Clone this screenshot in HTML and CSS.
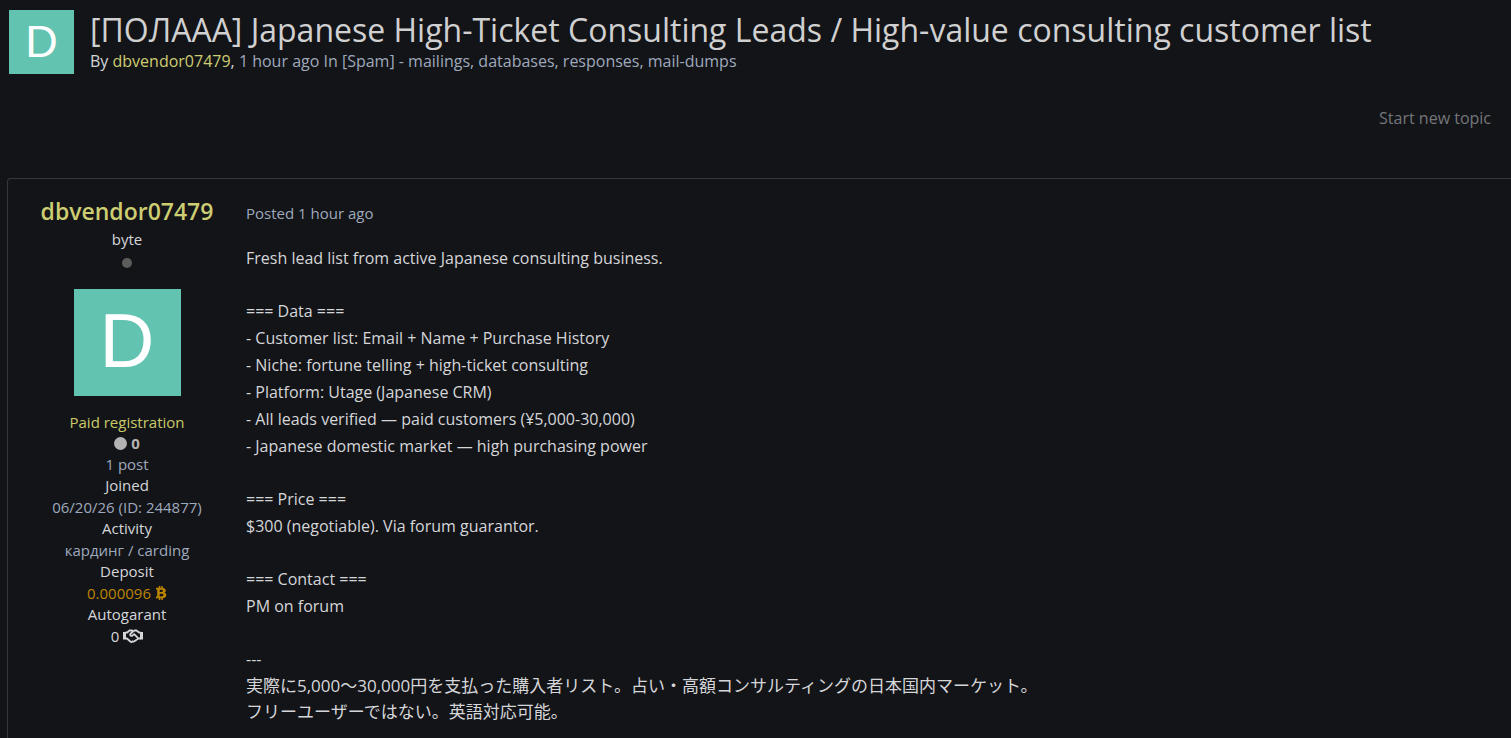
FILE: index.html
```html
<!DOCTYPE html>
<html lang="en">
<head>
<meta charset="utf-8">
<meta name="viewport" content="width=device-width, initial-scale=1">
<title>Japanese High-Ticket Consulting Leads</title>
<link rel="stylesheet" href="styles.css">
</head>
<body>
<header class="topic-header">
  <div class="avatar avatar-small">D</div>
  <div class="topic-heading">
    <h1 class="topic-title">[ПОЛААА] Japanese High-Ticket Consulting Leads / High-value consulting customer list</h1>
    <p class="topic-meta"><span class="strong-text">By <a class="user-link" href="#user">dbvendor07479</a>,</span> 1 hour ago In <a class="forum-link" href="#forum">[Spam] - mailings, databases, responses, mail-dumps</a></p>
  </div>
</header>
<nav class="topic-actions">
  <a class="new-topic" href="#new">Start new topic</a>
</nav>
<main class="post">
  <aside class="author">
    <h2 class="author-name"><a class="user-link" href="#user">dbvendor07479</a></h2>
    <p class="author-rank">byte</p>
    <span class="status-dot"></span>
    <div class="avatar avatar-large">D</div>
    <p class="author-group">Paid registration</p>
    <p class="reputation"><span class="reputation-dot"></span>0</p>
    <p class="post-count">1 post</p>
    <dl class="author-stats">
      <dt>Joined</dt>
      <dd>06/20/26 (ID: 244877)</dd>
      <dt>Activity</dt>
      <dd>кардинг / carding</dd>
      <dt>Deposit</dt>
      <dd class="deposit">0.000096
        <svg class="icon-bitcoin" viewBox="0 0 12 14" aria-hidden="true"><path fill="currentColor" fill-rule="evenodd" d="M1 1.8h2.8V0h1.5v1.8h1V0h1.5v2c2 .3 3 1.200 3 2.600 0 1-.5 1.700-1.400 2.100 1.300.4 1.900 1.200 1.900 2.400 0 1.900-1.300 2.900-3.500 3.100V14H6.300v-1.700h-1V14H3.800v-1.700H.7l.3-1.700h1.200V3.500H1zM4.700 3.700v2.300h1.400c1.200 0 1.800-.4 1.800-1.200s-.6-1.100-1.800-1.100zM4.700 7.800v2.600h1.700c1.300 0 2-.4 2-1.300s-.7-1.300-2-1.300z"/></svg>
      </dd>
      <dt>Autogarant</dt>
      <dd class="autogarant">0
        <svg class="icon-handshake" viewBox="0 0 20 14" aria-hidden="true"><path fill="currentColor" d="M0 3h3v7.500H0zM17 3H20v7.500h-3z"/><path fill="none" stroke="currentColor" stroke-width="1.800" stroke-linejoin="round" stroke-linecap="round" d="M3 3.500h1.200L6.500 1.500h2.700l1 .7 1.300-.7h2l2.500 2H17M3 9.500h1l3.300 3c.8.600 1.600.5 2.100-.1.900.5 1.700.2 2.100-.6.900.200 1.500-.2 1.700-1 .9 0 1.500-.5 1.600-1.300H17M10.200 2.300 7.300 5c-.5 1.300.7 2.400 2 1.700l1.900-1.600 3.400 3.500"/></svg>
      </dd>
    </dl>
  </aside>
  <article class="post-body">
    <p class="post-date">Posted 1 hour ago</p>
    <div class="post-content">
      <p>Fresh lead list from active Japanese consulting business.</p>
      <p>=== Data ===<br>
      - Customer list: Email + Name + Purchase History<br>
      - Niche: fortune telling + high-ticket consulting<br>
      - Platform: Utage (Japanese CRM)<br>
      - All leads verified — paid customers (¥5,000-30,000)<br>
      - Japanese domestic market — high purchasing power</p>
      <p>=== Price ===<br>
      $300 (negotiable). Via forum guarantor.</p>
      <p>=== Contact ===<br>
      PM on forum</p>
      <div>
        <p>---</p>
        <p class="japanese" lang="ja">実際に5,000～30,000円を支払った購入者リスト。占い・高額コンサルティングの日本国内マーケット。<br>
        フリーユーザーではない。英語対応可能。</p>
      </div>
    </div>
  </article>
</main>
</body>
</html>
```
FILE: styles.css
```css
* { box-sizing: border-box; }

body {
  margin: 0;
  min-height: 100vh;
  display: flex;
  flex-direction: column;
  background: #131418;
  color: #d5d6d8;
  font-family: "Open Sans", "Noto Sans CJK JP", sans-serif;
  font-size: 16px;
}

h1, h2, p, dl, dd { margin: 0; }
a { color: inherit; text-decoration: none; }

.topic-header {
  display: flex;
  gap: 16px;
  padding: 10px 9px 0;
}

.avatar {
  display: flex;
  flex: none;
  align-items: center;
  justify-content: center;
  background: #63c3b1;
  color: #fff;
  font-family: "Liberation Sans", Arial, sans-serif;
}
.avatar-small { width: 65px; height: 64px; font-size: 45px; }
.avatar-large {
  width: 107px;
  height: 107px;
  margin-bottom: 15px;
  padding-bottom: 4px;
  font-size: 76px;
}

.topic-title {
  font-size: 32px;
  font-weight: 400;
  line-height: 40px;
  color: #d0d0d0;
}
.topic-meta { line-height: 22px; color: #9fa9bc; }
.strong-text { color: #d5d6d8; }
.user-link { color: #cdcd72; }

.topic-actions {
  display: flex;
  justify-content: flex-end;
  padding: 32px 20px 48px;
}
.new-topic { line-height: 24px; color: #74767a; }

.post {
  flex: 1;
  display: flex;
  margin-left: 7px;
  border: solid #36373b;
  border-width: 1px 0 0 1px;
  border-top-left-radius: 4px;
}

.author {
  flex: none;
  width: 238px;
  display: flex;
  flex-direction: column;
  align-items: center;
  padding-top: 16px;
  font-size: 15px;
  line-height: 22px;
  text-align: center;
}
.author-name { font-size: 23px; font-weight: 600; line-height: 32px; }
.author-rank { line-height: 24px; }
.status-dot {
  width: 10px;
  height: 10px;
  margin: 7px 0 21px;
  border-radius: 50%;
  background: #5c5c5c;
}
.author-group { color: #c9cb68; }
.reputation {
  display: flex;
  align-items: center;
  gap: 4px;
  line-height: 21px;
  font-weight: 700;
  color: #b3b3b3;
}
.reputation-dot { width: 13px; height: 13px; border-radius: 50%; background: #b3b3b3; }
.post-count { line-height: 21px; color: #9fa9bc; }
.author-stats dt { line-height: 21px; }
.author-stats dd { color: #9fa9bc; }
.author-stats .deposit,
.author-stats .autogarant {
  display: flex;
  align-items: center;
  justify-content: center;
  gap: 4px;
}
.author-stats .deposit { color: #bd8500; }
.author-stats .autogarant { color: #d5d6d8; }
.icon-bitcoin { width: 12px; height: 14px; }
.icon-handshake { width: 20px; height: 14px; }

.post-body { flex: 1; min-width: 0; padding-top: 22px; }
.post-date { font-size: 15px; line-height: 24px; color: #9fa9bc; }
.post-content {
  display: flex;
  flex-direction: column;
  gap: 26px;
  padding: 20px 0 8px;
  line-height: 27px;
}
.japanese { font-size: 17px; line-height: 26px; }
```
